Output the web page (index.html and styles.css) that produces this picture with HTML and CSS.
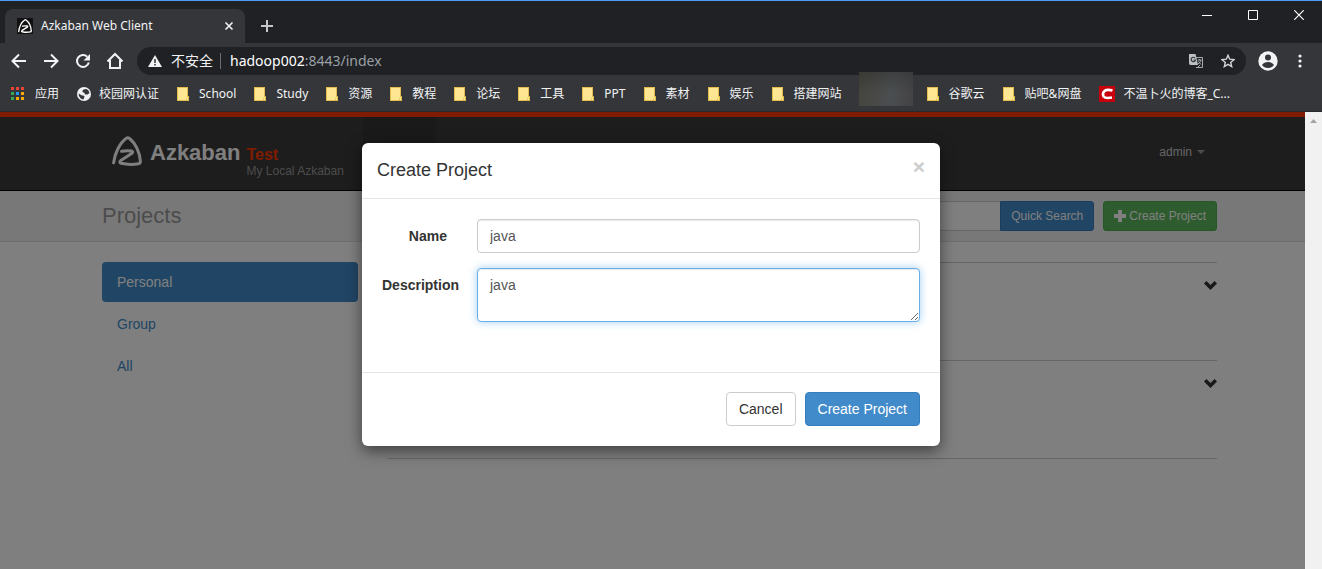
FILE: index.html
```html
<!DOCTYPE html>
<html lang="zh-CN">
<head>
<meta charset="utf-8">
<title>Azkaban Web Client</title>
<link rel="stylesheet" href="styles.css">
</head>
<body>
<svg class="defs" aria-hidden="true">
  <symbol id="azkaban" viewBox="0 0 30 30">
    <path d="M1.600 26.800C2.600 18 7.500 7 14.400 2.200Q15.800 1.300 17.200 2.200C23.500 7 28 17 28.400 25.500Q28.400 27.300 26.500 27.700Q18 29.300 9 27.300Q6.800 26.300 8.800 24.500L20 17.300Q21.500 15.500 19.500 15Q14.500 14.200 9.600 15.300" fill="none" stroke="currentColor" stroke-width="3" stroke-linecap="round" stroke-linejoin="round"/>
  </symbol>
  <symbol id="folder" viewBox="0 0 12 14">
    <path d="M0 0h11v9h1v5H0z" fill="#e3bd4c"/><path d="M1 1h9v9l-1 3H1z" fill="#ffe693"/><path d="M10 10h1v3h-1z" fill="#ffe693"/>
  </symbol>
  <symbol id="chevron" viewBox="0 0 13 9">
    <path d="M0 2.600 2.400 0 6.500 4 10.600 0 13 2.600 6.500 9z" fill="#333"/>
  </symbol>
</svg>
<div class="browser">
  <header class="tabstrip">
    <div class="tab">
      <span class="favicon"><svg width="14" height="14"><use href="#azkaban"/></svg></span>
      <span class="tab-title">Azkaban Web Client</span>
      <button class="icon-btn" aria-label="Close tab"><svg width="10" height="10" viewBox="0 0 10 10"><path d="M1.500 1.500l7 7m0-7l-7 7" stroke="#f1f3f4" stroke-width="1.600"/></svg></button>
    </div>
    <button class="icon-btn new-tab" aria-label="New tab"><svg width="12" height="12" viewBox="0 0 12 12"><path d="M6 0v12M0 6h12" stroke="#c4c7ca" stroke-width="2"/></svg></button>
    <div class="window-controls">
      <button class="icon-btn" aria-label="Minimize"><svg width="10" height="11" viewBox="0 0 10 11"><path d="M0 5.500h10" stroke="#fff"/></svg></button>
      <button class="icon-btn" aria-label="Maximize"><svg width="10" height="10" viewBox="0 0 10 10"><path d="M.5.5h9v9h-9z" stroke="#fff" fill="none"/></svg></button>
      <button class="icon-btn" aria-label="Close"><svg width="10" height="10" viewBox="0 0 10 10"><path d="M.3.3l9.400 9.400m0-9.400l-9.400 9.400" stroke="#fff" stroke-width="1.200"/></svg></button>
    </div>
  </header>
  <div class="toolbar">
    <button class="icon-btn" aria-label="Back"><svg width="16" height="16" viewBox="0 0 16 16"><path d="M15 8H2M8 1.500 1.500 8 8 14.500" fill="none" stroke="#f1f3f4" stroke-width="2"/></svg></button>
    <button class="icon-btn" aria-label="Forward"><svg width="16" height="16" viewBox="0 0 16 16"><path d="M1 8h13M8 1.500 14.500 8 8 14.500" fill="none" stroke="#f1f3f4" stroke-width="2"/></svg></button>
    <button class="icon-btn" aria-label="Reload"><svg width="16" height="16" viewBox="0 0 16 16"><path d="M13.800 9.500A6 6 0 1 1 12.200 3.700" fill="none" stroke="#f1f3f4" stroke-width="2"/><path d="M15 1v6.500H8.500z" fill="#f1f3f4"/></svg></button>
    <button class="icon-btn" aria-label="Home"><svg width="18" height="18" viewBox="0 0 18 18"><path d="M1.500 9.500 9 2l7.500 7.500M4 8v8h10V8" fill="none" stroke="#f1f3f4" stroke-width="2"/></svg></button>
    <div class="omnibox">
      <svg width="14" height="12" viewBox="0 0 14 12"><path d="M7 0l7 12H0z" fill="#f1f3f4"/><path d="M6.300 4h1.400v4H6.300zM6.300 9h1.400v1.500H6.300z" fill="#202124"/></svg>
      <span class="insecure">不安全</span>
      <span class="address" role="textbox" aria-label="Address"><b>hadoop002</b>:8443/index</span>
      <button class="icon-btn" aria-label="Translate"><svg width="14" height="14" viewBox="0 0 14 14"><path d="M7 3.500h6.500v10H7" fill="none" stroke="#a8abae"/><path d="M0 0h6.500L9 11H1.500Q0 11 0 9z" fill="#bdc1c6"/><path d="M6 4A2.200 2.200 0 1 0 6.500 6H4.500" fill="none" stroke="#35363a" stroke-width="1.200"/><path d="M8.500 6h4M10.500 5v1M12 6q-1 3-3 4M9.500 7.500l2.500 3M9 13l2-2" fill="none" stroke="#a8abae"/></svg></button>
      <button class="icon-btn" aria-label="Bookmark"><svg width="14" height="14" viewBox="0 0 14 14"><path d="M7 1.300 8.700 5.200 13 5.600 9.700 8.400 10.700 12.600 7 10.400 3.300 12.600 4.300 8.400 1 5.600 5.300 5.200z" fill="none" stroke="#d2d4d7" stroke-width="1.400"/></svg></button>
    </div>
    <button class="icon-btn profile" aria-label="Profile"><svg width="20" height="20" viewBox="0 0 20 20"><circle cx="10" cy="10" r="9.700" fill="#f1f3f4"/><circle cx="10" cy="6.500" r="3" fill="#35363a"/><path d="M4 14q2-3 6-3t6 3q-2 3-6 3t-6-3" fill="#35363a"/></svg></button>
    <button class="icon-btn menu" aria-label="Menu"><svg width="4" height="14" viewBox="0 0 4 14"><circle cx="2" cy="2" r="1.600" fill="#f1f3f4"/><circle cx="2" cy="7" r="1.600" fill="#f1f3f4"/><circle cx="2" cy="12" r="1.600" fill="#f1f3f4"/></svg></button>
  </div>
  <nav class="bookmarks" aria-label="Bookmarks">
    <a href="#" class="apps"><svg width="14" height="14" viewBox="0 0 14 14"><path d="M0 0h3v3H0zM5 0h3v3H5zM10 0h3v3h-3z" fill="#ea4335"/><path d="M0 5h3v3H0zM0 10h3v3H0z" fill="#34a853"/><path d="M5 5h3v3H5z" fill="#2196f3"/><path d="M10 5h3v3h-3zM5 10h3v3H5zM10 10h3v3h-3z" fill="#fbaa05"/></svg>应用</a>
    <a href="#" class="globe"><svg width="14" height="14" viewBox="0 0 14 14"><circle cx="7" cy="7" r="7" fill="#f1f3f4"/><path d="M1.500 6.500 5 8.500q2-.5 2.500 1L6.500 12.500Q2 12 1.500 6.500M6.500 2.500Q5 3.500 5.500 5L7.500 6 8 7.500h2.500L12.500 6Q12 3 9.500 2z" fill="#35363a"/></svg>校园网认证</a>
    <a href="#"><svg width="12" height="14"><use href="#folder"/></svg>School</a>
    <a href="#"><svg width="12" height="14"><use href="#folder"/></svg>Study</a>
    <a href="#"><svg width="12" height="14"><use href="#folder"/></svg>资源</a>
    <a href="#"><svg width="12" height="14"><use href="#folder"/></svg>教程</a>
    <a href="#"><svg width="12" height="14"><use href="#folder"/></svg>论坛</a>
    <a href="#"><svg width="12" height="14"><use href="#folder"/></svg>工具</a>
    <a href="#"><svg width="12" height="14"><use href="#folder"/></svg>PPT</a>
    <a href="#"><svg width="12" height="14"><use href="#folder"/></svg>素材</a>
    <a href="#"><svg width="12" height="14"><use href="#folder"/></svg>娱乐</a>
    <a href="#"><svg width="12" height="14"><use href="#folder"/></svg>搭建网站</a>
    <span class="smudge"></span>
    <a href="#"><svg width="12" height="14"><use href="#folder"/></svg>谷歌云</a>
    <a href="#"><svg width="12" height="14"><use href="#folder"/></svg>贴吧&amp;网盘</a>
    <a href="#" class="blog"><svg width="16" height="16" viewBox="0 0 16 16"><path d="M0 0h16v16H0z" fill="#c7000b"/><path d="M13.500 4.500Q8 3 5.500 5T4.500 10.500Q6.500 12.800 13 11.500" fill="none" stroke="#fff" stroke-width="2.600"/></svg>不温卜火的博客_C...</a>
  </nav>
</div>
<div class="viewport">
  <div class="page">
    <div class="navbar">
      <a class="brand" href="#"><svg width="30" height="30"><use href="#azkaban"/></svg>Azkaban</a>
      <div class="instance"><strong>Test</strong><span>My Local Azkaban</span></div>
      <span class="nav-active"></span>
      <button class="user">admin <span class="caret"></span></button>
    </div>
    <div class="page-head">
      <h1>Projects</h1>
      <form class="search"><input type="text" aria-label="Search projects"><button type="button" class="btn-small primary">Quick Search</button></form>
      <button class="btn-small success"><svg width="12" height="12" viewBox="0 0 12 12"><path d="M4 0h4v4h4v4H8v4H4V8H0V4h4z" fill="#fff"/></svg>Create Project</button>
    </div>
    <div class="content">
      <nav class="side">
        <a class="active" href="#">Personal</a>
        <a href="#">Group</a>
        <a href="#">All</a>
      </nav>
      <div class="projects">
        <section><svg width="13" height="9"><use href="#chevron"/></svg></section>
        <section><svg width="13" height="9"><use href="#chevron"/></svg></section>
      </div>
    </div>
    <div class="backdrop">
      <form class="modal" role="dialog" aria-labelledby="modal-title">
        <div class="modal-head"><h2 id="modal-title">Create Project</h2><button type="button" class="close" aria-label="Close">×</button></div>
        <div class="modal-body">
          <div class="field"><label for="name">Name</label><input id="name" type="text" value="java"></div>
          <div class="field"><label for="desc">Description</label><textarea id="desc" rows="2">java</textarea></div>
        </div>
        <div class="modal-foot"><button type="button" class="btn">Cancel</button><button type="button" class="btn primary">Create Project</button></div>
      </form>
    </div>
  </div>
  <div class="scrollbar"><svg width="7" height="4" viewBox="0 0 7 4"><path d="M0 4l3.500-4L7 4z" fill="#a3a3a3"/></svg></div>
</div>
</body>
</html>
```
FILE: styles.css
```css
* { box-sizing: border-box; }
html, body { height: 100%; }
body {
  margin: 0;
  display: flex;
  flex-direction: column;
  overflow: hidden;
  font: 14px/20px "Liberation Sans", Arial, sans-serif;
  color: #333;
}
button, input, textarea { font: inherit; }
a { text-decoration: none; }
svg { display: block; flex: none; }
.defs { position: absolute; width: 0; height: 0; }

/* Browser chrome */
.browser {
  flex: none;
  background: #35363a;
  border-top: 1px solid #4a9df8;
  border-bottom: 1px solid #28292c;
  color: #f1f3f4;
  font: 12px/16px "Noto Sans", "Noto Sans CJK SC", sans-serif;
}
.icon-btn {
  display: flex;
  align-items: center;
  justify-content: center;
  padding: 0;
  border: 0;
  background: none;
}
.tabstrip {
  display: flex;
  height: 42px;
  padding: 8px 0 0 5px;
  background: #202124;
}
.tab {
  display: flex;
  align-items: center;
  width: 240px;
  padding: 0 11px 0 12px;
  background: #35363a;
  border-radius: 8px 8px 0 0;
}
.favicon { padding: 1px; margin-right: 8px; background: #111; color: #fff; }
.tab-title { flex: 1; }
.new-tab { width: 44px; }
.window-controls { display: flex; margin: -8px 0 0 auto; height: 28px; }
.window-controls .icon-btn { width: 46px; }
.toolbar {
  display: flex;
  align-items: center;
  height: 36px;
  padding: 0 12px 0 3px;
}
.toolbar > .icon-btn { width: 32px; height: 28px; }
.omnibox {
  flex: 1;
  display: flex;
  align-items: center;
  height: 28px;
  margin-left: 6px;
  padding: 0 11px;
  border-radius: 14px;
  background: #202124;
  font-size: 14px;
}
.insecure { margin-left: 9px; padding-right: 7px; border-right: 1px solid #6b6d70; }
.address { flex: 1; margin-left: 9px; color: #9aa0a6; }
.address b { font-weight: 400; color: #fff; }
.omnibox .icon-btn { width: 14px; margin-left: 18px; }
.toolbar > .profile { width: 44px; }
.toolbar > .menu { width: 20px; }
.bookmarks {
  display: flex;
  align-items: center;
  gap: 18px;
  height: 32px;
  padding: 0 0 2px 11px;
  white-space: nowrap;
}
.bookmarks a { display: flex; align-items: center; gap: 10px; color: #f1f3f4; }
.bookmarks .apps { gap: 10px; }
.bookmarks .globe { gap: 8px; }
.bookmarks .blog { gap: 8px; }
.smudge {
  width: 54px;
  height: 34px;
  margin: -11px -4px 0 -1px;
  background: linear-gradient(rgba(32, 33, 36, .3), transparent 60%), linear-gradient(100deg, #45443c, #4b4e50 60%, #434245);
}

/* Application */
.viewport { flex: 1; display: flex; min-height: 0; }
.page { position: relative; flex: 1; background: #fff; }
.scrollbar { width: 17px; padding: 7px 5px; background: #f1f1f1; }
.navbar {
  display: flex;
  height: 79px;
  padding: 0 88px 0 112px;
  background: #3a3a3a;
  border-top: 5px solid #ff3601;
  border-bottom: 1px solid #000;
}
.brand {
  display: flex;
  align-items: center;
  gap: 8px;
  align-self: flex-start;
  margin-top: 19px;
  color: #fff;
  font-size: 22px;
  font-weight: 700;
  line-height: 34px;
}
.brand svg { margin-bottom: 4px; }
.instance { display: flex; flex-direction: column; margin: 28px 0 0 6px; font-size: 12px; line-height: 12px; color: #999; }
.instance strong { font-size: 16px; line-height: 20px; color: #ff3601; }
.nav-active { width: 73px; margin-left: 19px; background: #343434; }
.user {
  display: flex;
  align-items: center;
  gap: 5px;
  align-self: flex-start;
  margin: 25px 12px 0 auto;
  padding: 0;
  border: 0;
  background: none;
  color: #ccc;
  font-size: 12px;
  line-height: 20px;
}
.caret { border: 4px solid transparent; border-top-color: #999; border-bottom: 0; }
.page-head {
  display: flex;
  align-items: center;
  height: 51px;
  padding: 0 88px 0 102px;
  background: #f1f1f1;
  border-bottom: 1px solid #dcdcdc;
}
h1 { margin: 0 auto 0 0; font-size: 22px; font-weight: 400; color: #999; }
.search { display: flex; margin-right: 9px; }
.search input { width: 180px; height: 30px; border: 1px solid #ccc; border-right: 0; border-radius: 3px 0 0 3px; }
.btn-small {
  display: flex;
  align-items: center;
  gap: 3px;
  height: 30px;
  padding: 0 10px;
  border: 1px solid #4cae4c;
  border-radius: 3px;
  color: #fff;
  font-size: 12px;
}
.search .btn-small { border-radius: 0 3px 3px 0; }
.success { background: #5cb85c; }
.primary, .btn.primary { background: #428bca; border-color: #357ebd; color: #fff; }
.content { display: flex; gap: 30px; padding: 20px 88px 0 102px; }
.side { display: flex; flex-direction: column; gap: 2px; width: 256px; }
.side a { padding: 10px 15px; border-radius: 4px; color: #428bca; }
.side .active { background: #428bca; color: #fff; }
.projects { flex: 1; border-bottom: 1px solid #ccc; }
.projects section { display: flex; justify-content: flex-end; height: 98px; padding-top: 18px; border-top: 1px solid #ccc; }

/* Dialog */
.backdrop {
  position: absolute;
  inset: 0;
  padding: 31px 3px 0 0;
  background: rgba(0, 0, 0, .5);
}
.modal {
  max-width: 578px;
  margin: 0 auto;
  background: #fff;
  border-radius: 6px;
  box-shadow: 0 5px 15px rgba(0, 0, 0, .5);
}
.modal-head { display: flex; justify-content: space-between; align-items: flex-start; padding: 15px; border-bottom: 1px solid #e5e5e5; }
h2 { margin: 0; font-size: 18px; font-weight: 400; line-height: 25px; }
.close { padding: 0; border: 0; background: none; color: #ccc; font-size: 21px; font-weight: 700; line-height: 18px; }
.modal-body { display: flex; flex-direction: column; gap: 15px; padding: 20px 20px 50px; }
.field { display: flex; gap: 30px; }
.field label { width: 65px; padding-top: 7px; font-weight: 700; text-align: right; }
.field input, .field textarea {
  flex: 1;
  height: 34px;
  padding: 6px 12px;
  border: 1px solid #ccc;
  border-radius: 4px;
  background: #fff;
  color: #555;
  box-shadow: inset 0 1px 1px rgba(0, 0, 0, .08);
}
.field textarea {
  height: 54px;
  border-color: #66afe9;
  outline: 0;
  box-shadow: inset 0 1px 1px rgba(0, 0, 0, .08), 0 0 8px rgba(102, 175, 233, .6);
}
.modal-foot { display: flex; justify-content: flex-end; gap: 9px; padding: 19px 20px 20px; border-top: 1px solid #e5e5e5; }
.btn { height: 34px; padding: 0 12px; border: 1px solid #ccc; border-radius: 4px; background: #fff; color: #333; }
```
